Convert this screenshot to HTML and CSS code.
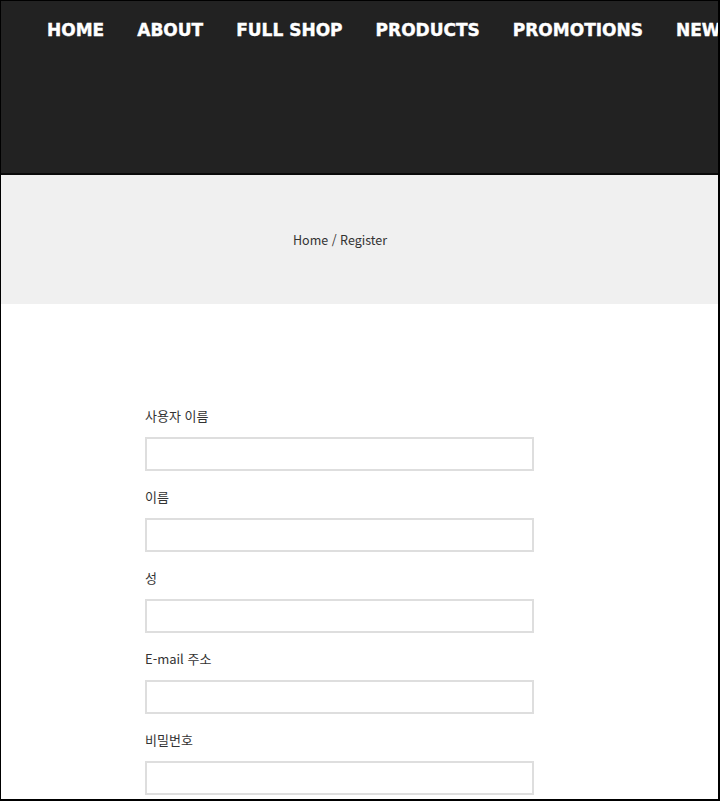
FILE: index.html
```html
<!DOCTYPE html>
<html lang="ko">
<head>
<meta charset="utf-8">
<title>Register</title>
<link rel="stylesheet" href="styles.css">
</head>
<body>
<div class="frame">
  <header class="site-header">
    <nav class="main-nav">
      <a href="#">HOME</a>
      <a href="#">ABOUT</a>
      <a href="#">FULL SHOP</a>
      <a href="#">PRODUCTS</a>
      <a href="#">PROMOTIONS</a>
      <a href="#">NEWS</a>
    </nav>
  </header>
  <div class="breadcrumb">
    <span>Home / Register</span>
  </div>
  <main class="content">
    <form class="register-form">
      <label class="field-label" for="username">사용자 이름</label>
      <input class="field-input" id="username" type="text">
      <label class="field-label" for="firstname">이름</label>
      <input class="field-input" id="firstname" type="text">
      <label class="field-label" for="lastname">성</label>
      <input class="field-input" id="lastname" type="text">
      <label class="field-label" for="email">E-mail 주소</label>
      <input class="field-input" id="email" type="email">
      <label class="field-label" for="password">비밀번호</label>
      <input class="field-input" id="password" type="password">
    </form>
  </main>
</div>
</body>
</html>
```

FILE: styles.css
```css
html, body {
  margin: 0;
  padding: 0;
  height: 100%;
  overflow: hidden;
  background: #fff;
}
.frame {
  box-sizing: border-box;
  width: 720px;
  height: 801px;
  border-style: solid;
  border-color: #000;
  border-width: 1px 2px 2px 1px;
  overflow: hidden;
  display: flex;
  flex-direction: column;
}
.site-header {
  background: #222;
  height: 172px;
  border-bottom: 2px solid #0a0a0a;
  flex-shrink: 0;
}
.main-nav {
  display: flex;
  gap: 33px;
  padding: 0 0 0 46px;
  height: 57px;
  align-items: center;
  white-space: nowrap;
}
.main-nav a {
  color: #fff;
  text-decoration: none;
  font-family: "DejaVu Sans", sans-serif;
  font-weight: bold;
  font-size: 17px;
  letter-spacing: 0;
  -webkit-text-stroke: 0.4px #fff;
}
.breadcrumb {
  background: #f0f0f0;
  height: 129px;
  flex-shrink: 0;
  display: flex;
  align-items: center;
  padding-left: 292px;
  font-family: "Noto Sans CJK KR", "Noto Sans", sans-serif;
  font-size: 12.5px;
  color: #333;
}
.content {
  padding: 103px 0 0 144px;
}
.register-form {
  display: flex;
  flex-direction: column;
  width: 389px;
}
.field-label {
  font-family: "Noto Sans CJK KR", "Noto Sans", sans-serif;
  font-size: 13px;
  line-height: 18px;
  color: #333;
  margin-bottom: 12px;
}
.field-input {
  box-sizing: border-box;
  height: 34px;
  width: 389px;
  border: 2px solid #dedede;
  background: #fff;
  margin: 0 0 17px 0;
  padding: 0 8px;
}
```
